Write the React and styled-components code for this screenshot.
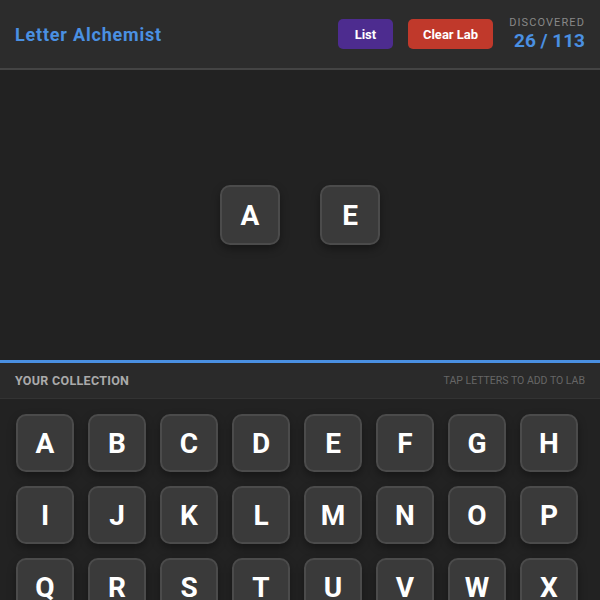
import React from "react";
import styled, { createGlobalStyle } from "styled-components";

const Global = createGlobalStyle`
  html, body { margin: 0; padding: 0; background: #222222; }
  body { font-family: Roboto, "Liberation Sans", Arial, sans-serif; color: #fff; overflow: hidden; }
  * { box-sizing: border-box; }
`;

const Page = styled.div`
  display: flex;
  flex-direction: column;
  width: 600px;
`;

const Header = styled.header`
  height: 70px;
  background: #2c2c2c;
  border-bottom: 2px solid #444444;
  display: flex;
  align-items: center;
  padding: 0 15px;
`;

const Title = styled.h1`
  margin: 0;
  flex: 1;
  font-size: 18px;
  font-weight: 700;
  letter-spacing: 0.8px;
  color: #4a90e2;
`;

const Button = styled.button`
  border: none;
  border-radius: 5px;
  height: 30px;
  min-width: ${(p) => p.$min || 0}px;
  padding: 0 15px;
  margin-right: 15px;
  font-family: inherit;
  font-size: 13px;
  font-weight: 700;
  color: #ffffff;
  background: ${(p) => p.$bg};
  cursor: pointer;
`;

const Counter = styled.div`
  display: flex;
  flex-direction: column;
  align-items: flex-end;
  margin-left: 1px;
`;

const CounterLabel = styled.span`
  font-size: 11px;
  letter-spacing: 1.1px;
  color: #888888;
  line-height: 13px;
`;

const CounterValue = styled.span`
  font-size: 19px;
  font-weight: 700;
  color: #4a90e2;
  line-height: 23px;
`;

const Lab = styled.main`
  height: 290px;
  background: #222222;
  display: flex;
  align-items: center;
  justify-content: center;
  gap: 40px;
`;

const Tile = styled.div`
  width: ${(p) => p.$size}px;
  height: ${(p) => p.$size}px;
  background: #3a3a3a;
  border: 2px solid #4b4b4b;
  border-radius: 10px;
  display: flex;
  align-items: center;
  justify-content: center;
  font-size: 28px;
  font-weight: 700;
  color: #ffffff;
  box-shadow: 0 4px 8px rgba(0, 0, 0, 0.35);
`;

const Collection = styled.section`
  border-top: 3px solid #4a90e2;
  background: #222222;
`;

const CollectionHeader = styled.div`
  height: 36px;
  background: #2a2a2a;
  border-bottom: 1px solid #333333;
  display: flex;
  align-items: center;
  justify-content: space-between;
  padding: 0 15px;
`;

const CollectionTitle = styled.span`
  font-size: 12.5px;
  font-weight: 700;
  color: #aaaaaa;
  letter-spacing: 0.3px;
`;

const Hint = styled.span`
  font-size: 10.5px;
  color: #666666;
`;

const Grid = styled.div`
  display: grid;
  grid-template-columns: repeat(8, 58px);
  gap: 14px;
  padding: 15px 16px;
`;

const letters = "ABCDEFGHIJKLMNOPQRSTUVWX".split("");

export default function App() {
  return (
    <Page>
      <Global />
      <Header>
        <Title>Letter Alchemist</Title>
        <Button $bg="#4d2c8f" $min={55}>List</Button>
        <Button $bg="#c0392b">Clear Lab</Button>
        <Counter>
          <CounterLabel>DISCOVERED</CounterLabel>
          <CounterValue>26 / 113</CounterValue>
        </Counter>
      </Header>
      <Lab>
        <Tile $size={60}>A</Tile>
        <Tile $size={60}>E</Tile>
      </Lab>
      <Collection>
        <CollectionHeader>
          <CollectionTitle>YOUR COLLECTION</CollectionTitle>
          <Hint>TAP LETTERS TO ADD TO LAB</Hint>
        </CollectionHeader>
        <Grid>
          {letters.map((l) => (
            <Tile key={l} $size={58}>
              {l}
            </Tile>
          ))}
        </Grid>
      </Collection>
    </Page>
  );
}
